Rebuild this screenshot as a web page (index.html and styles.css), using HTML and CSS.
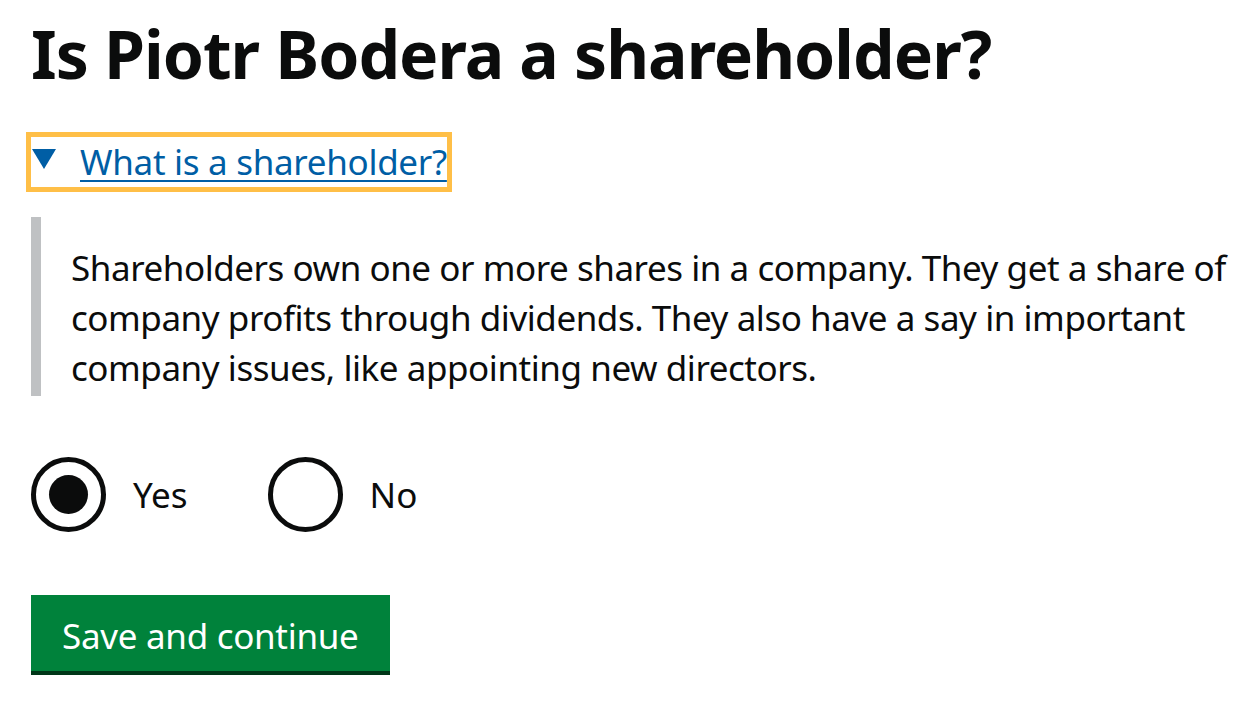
FILE: index.html
```html
<!DOCTYPE html>
<html lang="en">
<head>
  <meta charset="utf-8" />
  <title>Is Piotr Bodera a shareholder?</title>
  <link rel="stylesheet" href="styles.css">
</head>
<body>
<main class="page">
  <h1 class="heading">Is Piotr Bodera a shareholder?</h1>

  <!-- details: open, summary has keyboard focus -->
  <details class="details" open>
    <summary class="details-summary"><span class="summary-text">What is a shareholder?</span></summary>
    <div class="details-text">
      Shareholders own one or more shares in a company. They get a share of company profits through dividends. They also have a say in important company issues, like appointing new directors.
    </div>
  </details>

  <div class="radios">
    <label class="radio">
      <input type="radio" name="shareholder" value="yes" checked>
      <span class="radio-mark"></span>
      <span class="radio-label">Yes</span>
    </label>
    <label class="radio">
      <input type="radio" name="shareholder" value="no">
      <span class="radio-mark"></span>
      <span class="radio-label">No</span>
    </label>
  </div>

  <button class="button" type="submit">Save and continue</button>
</main>
</body>
</html>
```

FILE: styles.css
```css
body{
  margin: 0;
  background: #fff;
  color: #0b0c0c;
  font-family: 'Noto Sans', sans-serif;
}
.page{
  padding: 13px 0 0 31px;
}
.heading{
  margin: 0;
  font-size: 66px;
  line-height: 80px;
  font-weight: 700;
  letter-spacing: -1px;
}
.details{
  margin-top: 44px;
  font-size: 35px;
  line-height: 50px;
  letter-spacing: -0.3px;
}
.details-summary{
  display: inline-block;
  position: relative;
  padding-left: 49px;
  color: #005ea5;
  cursor: pointer;
  outline: 5px solid #ffbf47;
  list-style: none;
}
.details-summary::-webkit-details-marker{
  display: none;
}
.details-summary::before{
  content: "";
  position: absolute;
  left: 1px;
  top: 12px;
  border-style: solid;
  border-width: 20px 12px 0 12px;
  border-color: #005ea5 transparent transparent transparent;
}
.summary-text{
  text-decoration: underline;
  text-decoration-thickness: 2px;
  text-underline-offset: 5px;
}
.details-text{
  margin-top: 30px;
  padding: 26px 0 3px 30px;
  border-left: 10px solid #bfc1c3;
  max-width: 1170px;
  letter-spacing: -0.45px;
}
.radios{
  display: flex;
  gap: 80px;
  margin-top: 61px;
}
.radio{
  display: flex;
  align-items: center;
  gap: 27px;
  font-size: 35px;
  cursor: pointer;
}
.radio input{
  display: none;
}
.radio-mark{
  position: relative;
  width: 75px;
  height: 75px;
  box-sizing: border-box;
  border: 5px solid #0b0c0c;
  border-radius: 50%;
}
.radio input:checked + .radio-mark::after{
  content: "";
  position: absolute;
  left: 13px;
  top: 13px;
  width: 39px;
  height: 39px;
  border-radius: 50%;
  background: #0b0c0c;
}
.button{
  display: block;
  box-sizing: border-box;
  margin-top: 63px;
  padding: 4px 31px 0;
  height: 80px;
  border: 0;
  border-bottom: 4px solid #003618;
  border-radius: 0;
  background: #00823b;
  color: #fff;
  font-family: 'Noto Sans', sans-serif;
  font-size: 35px;
  letter-spacing: -0.3px;
  cursor: pointer;
}
```
